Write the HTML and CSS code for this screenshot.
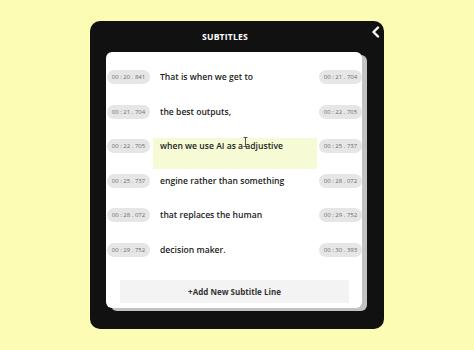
FILE: index.html
```html
<!DOCTYPE html>
<html lang="en">
<head>
    <meta charset="UTF-8">
    <title>Subtitles</title>
    <link rel="stylesheet" href="styles.css">
</head>
<body>
    <div class="panel">
        <div class="panel-head">
            <span class="panel-title">SUBTITLES</span>
            <span class="back">
                <svg width="9" height="12" viewBox="0 0 9 12"><path d="M7 1.5 L2.5 6 L7 10.5" fill="none" stroke="#fff" stroke-width="2.4" stroke-linecap="round" stroke-linejoin="round"/></svg>
            </span>
        </div>
        <div class="card">
            <ul class="lines">
                <li class="line">
                    <span class="time">00 : 20 . 841</span>
                    <span class="text">That is when we get to</span>
                    <span class="time">00 : 21 . 704</span>
                </li>
                <li class="line">
                    <span class="time">00 : 21 . 704</span>
                    <span class="text">the best outputs,</span>
                    <span class="time">00 : 22 . 705</span>
                </li>
                <li class="line active">
                    <span class="time">00 : 22 . 705</span>
                    <span class="text">when we use AI as a adjustive
                        <svg class="caret" width="5" height="10" viewBox="0 0 5 10"><path d="M0.5 0.5 H4.5 M2.5 0.5 V9.5 M0.5 9.5 H4.5" fill="none" stroke="#444" stroke-width="0.9"/></svg>
                    </span>
                    <span class="time">00 : 25 . 737</span>
                </li>
                <li class="line">
                    <span class="time">00 : 25 . 737</span>
                    <span class="text">engine rather than something</span>
                    <span class="time">00 : 28 . 072</span>
                </li>
                <li class="line">
                    <span class="time">00 : 28 . 072</span>
                    <span class="text">that replaces the human</span>
                    <span class="time">00 : 29 . 752</span>
                </li>
                <li class="line">
                    <span class="time">00 : 29 . 752</span>
                    <span class="text">decision maker.</span>
                    <span class="time">00 : 30 . 393</span>
                </li>
            </ul>
            <div class="add-line">+Add New Subtitle Line</div>
        </div>
    </div>
</body>
</html>
```

FILE: styles.css
```css
* {
    margin: 0;
    padding: 0;
    box-sizing: border-box;
}
body {
    background: #fdfcb4;
    font-family: "Open Sans", "Liberation Sans", sans-serif;
}
li {
    list-style: none;
}
.panel {
    width: 294px;
    height: 308px;
    margin: 21px 0 0 90px;
    background: #111111;
    border-radius: 10px;
    padding: 0 0 0 16px;
}
.panel-head {
    position: relative;
    height: 31px;
    display: flex;
    align-items: center;
    padding-left: 96px;
}
.panel-title {
    color: #ffffff;
    font-size: 8.6px;
    font-weight: 700;
    letter-spacing: 0.2px;
    line-height: 31px;
    padding-top: 1px;
}
.back {
    position: absolute;
    right: 4px;
    top: 5px;
    display: flex;
}
.card {
    width: 256px;
    height: 256px;
    background: #ffffff;
    border-radius: 6px;
    box-shadow: 5px 3px 0 #c2c2c2;
    padding-top: 17px;
}
.lines {
    display: flex;
    flex-direction: column;
}
.line {
    height: 34.6px;
    display: flex;
    align-items: flex-start;
}
.time {
    margin: 1px 0 0 1px;
    width: 43px;
    height: 14px;
    border-radius: 7px;
    background: #e6e6e6;
    color: #6c6c6c;
    font-size: 6px;
    line-height: 14px;
    text-align: center;
    white-space: nowrap;
}
.text {
    position: relative;
    width: 164px;
    height: 31px;
    margin: 0 1px 0 3px;
    padding-left: 7px;
    font-size: 8.6px;
    font-weight: 600;
    color: #1c1c1c;
    line-height: 16px;
}
.active .text {
    background: #f6fbd6;
}
.caret {
    position: absolute;
    left: 90px;
    top: -1px;
}
.add-line {
    margin: 3px 0 0 14px;
    width: 229px;
    height: 23px;
    background: #f3f3f3;
    color: #333333;
    font-size: 8px;
    font-weight: 700;
    line-height: 23px;
    text-align: center;
}
```
